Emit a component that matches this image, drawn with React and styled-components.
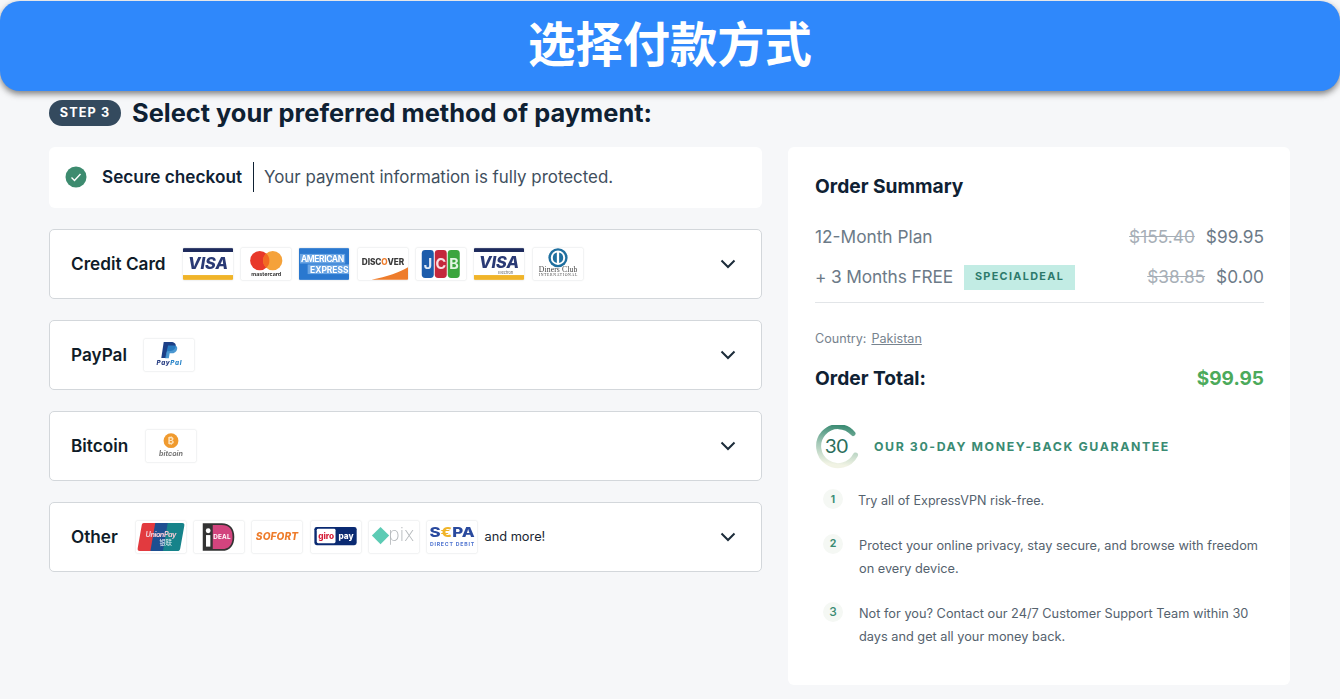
import React from "react";
import styled, { createGlobalStyle } from "styled-components";

const Global = createGlobalStyle`
  html, body { margin: 0; padding: 0; background: #f6f7f9; }
  body { font-family: Inter, "Noto Sans CJK SC", sans-serif; color: #0f2133; }
  * { box-sizing: border-box; }
`;

const Page = styled.div`
  width: 1340px; height: 699px; overflow: hidden; background: #f6f7f9; padding-top: 1px;
`;
const Banner = styled.header`
  height: 90px; background: #2f88fb; border-radius: 20px;
  box-shadow: 0 3px 6px rgba(30, 30, 30, .55);
  display: flex; align-items: center; justify-content: center;
  color: #fff; font: 700 47.300px/1 "Noto Sans CJK SC", sans-serif;
  padding-bottom: 8px;
`;
const Content = styled.main`
  padding: 9px 50px 0 49px;
`;
const StepLine = styled.div`
  display: flex; align-items: center; gap: 11px; height: 26px;
`;
const StepPill = styled.span`
  width: 72px; height: 26px; border-radius: 13px; background: #344a5e; color: #fff;
  display: flex; align-items: center; justify-content: center;
  font: 700 12.700px/1 Inter, sans-serif; letter-spacing: 1.100px;
`;
const Title = styled.h1`
  margin: 0; font: 700 25.400px/26px Inter, sans-serif; color: #0f2133;
`;
const Columns = styled.div`
  display: flex; gap: 26px; margin-top: 21px; align-items: flex-start;
`;
const Left = styled.section`
  width: 713px; display: flex; flex-direction: column; gap: 21px;
`;
const Secure = styled.div`
  height: 61px; background: #fff; border-radius: 6px; display: flex; align-items: center;
  padding: 0 0 1px 16px;
`;
const SecureBold = styled.strong`
  font: 600 17.200px/1 Inter, sans-serif; margin-left: 15px; color: #0f2133;
`;
const Divider = styled.span`
  width: 1px; height: 30px; background: #0f2133; margin: 0 10px 0 11px;
`;
const SecureText = styled.span`
  font: 400 16.900px/1 Inter, sans-serif; color: #3f4f5e; margin-top: 1px;
`;
const Row = styled.div`
  height: 70px; background: #fff; border: 1px solid #d3d7db; border-radius: 5px;
  display: flex; align-items: center; padding: 0 25px 0 21px;
`;
const RowLabel = styled.span`
  font: 600 17.200px/1 Inter, sans-serif; color: #0f1c28; margin-right: ${p => p.$gap}px;
`;
const Logos = styled.div`
  display: flex; gap: 8.330px; align-items: center; flex: 1;
`;
const LogoBox = styled.span`
  width: 50px; height: 32px; background: #fff; display: block; flex: none;
  box-shadow: 0 0 1.500px rgba(60, 70, 80, .32);
  border-radius: 1px; overflow: hidden;
  svg { display: block; width: 100%; height: 100%; filter: blur(.35px); }
`;
const More = styled.span`
  font: 400 12.800px/1 Inter, sans-serif; color: #1b2733; margin-left: -1.330px;
`;
const Summary = styled.aside`
  width: 502px; height: 538px; background: #fff; border-radius: 6px; padding: 27px 26px 0 27px;
`;
const SummaryTitle = styled.h2`
  margin: 0; font: 700 19.200px/24px Inter, sans-serif; color: #0f2133;
`;
const PriceRow = styled.div`
  display: flex; align-items: center; justify-content: space-between; height: 26px;
  margin-top: ${p => p.$top}px; color: #6c7a87; font: 400 17.300px/1 Inter, sans-serif;
`;
const PriceLabel = styled.div` display: flex; align-items: center; gap: 11px; `;
const FreeText = styled.span` letter-spacing: -.13px; `;
const Promo = styled.span`
  width: 111px; height: 25px; background: #c2ece4; color: #2d7a6b;
  display: flex; align-items: center; justify-content: center;
  font: 700 10.800px/1 Inter, sans-serif; letter-spacing: 1.350px;
`;
const Prices = styled.div` display: flex; gap: 11px; `;
const Old = styled.s` color: #a7afb7; `;
const Rule = styled.hr`
  border: 0; height: 1px; background: #e2e5e8; margin: 12px 0 0;
`;
const Country = styled.div`
  margin-top: 29px; font: 400 12.600px/14px Inter, sans-serif; color: #77838e; display: flex; gap: 5px;
`;
const CountryLink = styled.a` color: #77838e; text-decoration: underline; `;
const Total = styled.div`
  display: flex; justify-content: space-between; align-items: center; margin-top: 19px;
  font: 700 19.200px/24px Inter, sans-serif; color: #0f2133;
`;
const TotalValue = styled.span` color: #4caa5b; font-size: 19px; margin-top: 2px; `;
const GuaranteeHead = styled.div`
  display: flex; align-items: center; gap: 15px; margin-top: 34px; height: 44px;
`;
const GuaranteeTitle = styled.span`
  font: 700 12.300px/1 Inter, sans-serif; letter-spacing: 1.600px; color: #3a8b73; white-space: nowrap;
`;
const Steps = styled.ol`
  list-style: none; margin: 0; padding: 0 0 0 8px;
`;
const StepItem = styled.li`
  display: flex; margin-top: ${p => p.$top}px;
  font: 400 ${p => p.$font}px/23px Inter, sans-serif; color: #55626e;
`;
const Num = styled.span`
  width: 20px; height: 20px; flex: none; border-radius: 50%; background: #f5f8f4; color: #3a8b73;
  font: ${p => p.$weight} ${p => p.$size}px/20px Inter, sans-serif; text-align: center; margin-right: ${p => p.$gap}px;
`;

const Visa = ({ sub }) => (
  <svg viewBox="0 0 52 33">
    <rect width="52" height="33" fill="#fff" />
    <rect width="52" height="4" fill="#1d2a5c" />
    <rect y="28" width="52" height="5" fill="#f0b429" />
    <text x="26" y={sub ? 20.500 : 22} textAnchor="middle" fontFamily="Inter" fontStyle="italic" fontWeight="800" fontSize="17" fill="#2a3a75">VISA</text>
    {sub && <text x="33" y="26.500" textAnchor="middle" fontFamily="Inter" fontSize="4" fill="#555">Electron</text>}
  </svg>
);
const Master = () => (
  <svg viewBox="0 0 52 33">
    <circle cx="19.500" cy="13" r="10" fill="#e8392a" />
    <circle cx="33" cy="13" r="10" fill="#f5a23a" />
    <path d="M26.250 5.600a10 10 0 0 1 0 14.800a10 10 0 0 1 0-14.800z" fill="#f26a22" />
    <text x="26.250" y="28.500" textAnchor="middle" fontFamily="Inter" fontWeight="700" fontSize="5.600" fill="#333">mastercard</text>
  </svg>
);
const Amex = () => (
  <svg viewBox="0 0 52 33">
    <rect width="52" height="33" fill="#2a78cf" />
    <rect x="1" y="6" width="47" height="10" fill="#6aa5e4" />
    <rect x="9" y="17" width="43" height="10" fill="#6aa5e4" />
    <text x="24.500" y="14.500" textAnchor="middle" textLength="45" fontFamily="Inter" fontWeight="700" fontSize="8.800" fill="#fff">AMERICAN</text>
    <text x="31.500" y="25.500" textAnchor="middle" textLength="40" fontFamily="Inter" fontWeight="700" fontSize="8.800" fill="#fff">EXPRESS</text>
  </svg>
);
const Discover = () => (
  <svg viewBox="0 0 52 33">
    <path d="M14 33C30 30 44 25 52 20V33z" fill="#ee7c2b" />
    <text x="26" y="17.500" textAnchor="middle" textLength="44" fontFamily="Inter" fontWeight="800" fontSize="8.600" fill="#3a3a3a">DISC<tspan fill="#ee7c2b">O</tspan>VER</text>
  </svg>
);
const Jcb = () => (
  <svg viewBox="0 0 52 33">
    <rect x="6" y="2" width="12.500" height="29" rx="3.500" fill="#1c5cab" />
    <rect x="19.500" y="2" width="12.500" height="29" rx="3.500" fill="#c4283c" />
    <rect x="33" y="2" width="12.500" height="29" rx="3.500" fill="#3ba53e" />
    <text x="12.500" y="22" textAnchor="middle" fontFamily="Inter" fontWeight="700" fontSize="15" fill="#dfe9f5">J</text>
    <text x="25.750" y="22" textAnchor="middle" fontFamily="Inter" fontWeight="700" fontSize="15" fill="#f7dfe3">C</text>
    <text x="39.500" y="22" textAnchor="middle" fontFamily="Inter" fontWeight="700" fontSize="15" fill="#e3f5e3">B</text>
  </svg>
);
const Diners = () => (
  <svg viewBox="0 0 52 33">
    <circle cx="26" cy="10" r="10" fill="#1f6f9f" />
    <circle cx="26" cy="10" r="7.500" fill="#fff" />
    <path d="M24.800 4.500a5.700 5.700 0 0 0 0 11z" fill="#1f6f9f" />
    <path d="M27.200 4.500a5.700 5.700 0 0 1 0 11z" fill="#1f6f9f" />
    <text x="26" y="25" textAnchor="middle" textLength="40" fontFamily="Liberation Serif" fontSize="8" fill="#444">Diners Club</text>
    <text x="26" y="29.500" textAnchor="middle" textLength="40" fontFamily="Liberation Serif" fontSize="4" fill="#444">INTERNATIONAL</text>
  </svg>
);
const PayPal = () => (
  <svg viewBox="0 0 52 33">
    <path d="M20.500 3h7.500c3.500 0 5.500 1.800 5 4.500-.6 3.700-3.400 5-7 5h-2L22.700 19.500h-4.700z" fill="#1c3f87" />
    <path d="M25 6.500h6.500c2.300 0 3.400 1.500 3 3.700-.6 3.200-3 4.600-6 4.600h-1.800l-.9 5.200h-3.900z" fill="#2a85c9" opacity=".85" />
    <text x="26" y="26.800" textAnchor="middle" textLength="26" fontFamily="Inter" fontStyle="italic" fontWeight="800" fontSize="6.600" fill="#253b80">Pay<tspan fill="#2a85c9">Pal</tspan></text>
  </svg>
);
const Bitcoin = () => (
  <svg viewBox="0 0 52 33">
    <circle cx="26" cy="11" r="7.700" fill="#f09a2e" />
    <text x="26" y="14.800" textAnchor="middle" fontFamily="Inter" fontWeight="700" fontSize="10" fill="#fde3bd">₿</text>
    <text x="26" y="26.500" textAnchor="middle" textLength="25" fontFamily="Inter" fontStyle="italic" fontWeight="700" fontSize="7.400" fill="#777">bitcoin</text>
  </svg>
);
const Union = () => (
  <svg viewBox="0 0 52 33">
    <path d="M8 2h14l-5 29H4c-2 0-2.600-1-2.200-3L6 4c.3-1.300 1-2 2-2z" fill="#e23a3f" />
    <path d="M20 2h15l-5 29H15z" fill="#1d4f91" />
    <path d="M33 2h15c2 0 2.600 1 2.200 3l-4.200 23.500c-.3 1.500-1 2.500-2 2.500H28z" fill="#16838a" />
    <text x="26" y="16" textAnchor="middle" textLength="32" fontFamily="Inter" fontStyle="italic" fontWeight="700" fontSize="7.600" fill="#f0c9d3">UnionPay</text>
    <text x="31" y="25" textAnchor="middle" fontFamily="Noto Sans CJK SC" fontSize="6.500" fill="#e9f0f3">银联</text>
  </svg>
);
const Ideal = () => (
  <svg viewBox="0 0 52 33">
    <path d="M10 3h19c8 0 12 5.500 12 13.500S37 30 29 30H10z" fill="#d2447e" stroke="#333" strokeWidth="1.800" />
    <rect x="10" y="3" width="9.500" height="27" fill="#333" />
    <rect x="12.500" y="14.500" width="4.500" height="12" fill="#fff" />
    <circle cx="14.750" cy="10" r="2.500" fill="#fff" />
    <text x="29" y="18.500" textAnchor="middle" textLength="18" fontFamily="Inter" fontWeight="700" fontSize="6.600" fill="#fff">DEAL</text>
  </svg>
);
const Sofort = () => (
  <svg viewBox="0 0 52 33">
    <text x="26" y="19.800" textAnchor="middle" textLength="44" fontFamily="Inter" fontStyle="italic" fontWeight="800" fontSize="10.500" fill="#ee7c2b">SOFORT</text>
  </svg>
);
const Giro = () => (
  <svg viewBox="0 0 52 33">
    <rect x="3.500" y="6" width="44" height="19" rx="2.500" fill="#0a2a72" />
    <rect x="6" y="8" width="19.500" height="15" rx="1.500" fill="#fff" />
    <text x="15.750" y="18.800" textAnchor="middle" fontFamily="Inter" fontWeight="800" fontSize="8.600" fill="#d5203a">giro</text>
    <text x="36.500" y="18.800" textAnchor="middle" fontFamily="Inter" fontWeight="800" fontSize="8.600" fill="#fff">pay</text>
  </svg>
);
const Pix = () => (
  <svg viewBox="0 0 52 33">
    <path d="M12 6l9 9-9 9-9-9z" fill="#5ccbb4" />
    <text x="33.500" y="20.500" textAnchor="middle" textLength="27" fontFamily="Inter" fontWeight="200" fontSize="20" fill="#b5b9bc">pix</text>
  </svg>
);
const Sepa = () => (
  <svg viewBox="0 0 52 33">
    <text x="26" y="16.500" textAnchor="middle" textLength="47" lengthAdjust="spacingAndGlyphs" fontFamily="Inter" fontWeight="800" fontSize="14" fill="#2a4a9e">S<tspan fill="#f0b429">€</tspan>PA</text>
    <text x="26" y="25.500" textAnchor="middle" textLength="46" fontFamily="Inter" fontWeight="700" fontSize="5.400" fill="#4f74d0">DIRECT DEBIT</text>
  </svg>
);

const Check = () => (
  <svg width="22" height="22" viewBox="0 0 22 22" style={{ flex: "none" }}>
    <circle cx="11" cy="11" r="10.500" fill="#3d8b6f" />
    <path d="M6.500 11.500l3 3 6-6.500" fill="none" stroke="#fff" strokeWidth="1.400" />
  </svg>
);
const Chevron = () => (
  <svg width="16" height="10" viewBox="0 0 16 10" style={{ flex: "none" }}>
    <path d="M1.500 1.500L8 8l6.500-6.500" fill="none" stroke="#1c2c3a" strokeWidth="2" />
  </svg>
);
const Badge30 = () => (
  <svg width="44" height="44" viewBox="0 0 44 44" style={{ flex: "none" }}>
    <defs>
      <linearGradient id="ring" x1="0.800" y1="0" x2="0.700" y2="1">
        <stop offset="0" stopColor="#3c8c74" />
        <stop offset=".5" stopColor="#a5c9b8" />
        <stop offset="1" stopColor="#f1f3e4" />
      </linearGradient>
    </defs>
    <path d="M38 8.500A19.500 19.500 0 1 0 40.500 30" fill="none" stroke="url(#ring)" strokeWidth="5" strokeLinecap="round" />
    <text x="21.500" y="28" textAnchor="middle" fontFamily="Lato" fontSize="20" fill="#2b6e5c">30</text>
  </svg>
);

const Logo = ({ children }) => <LogoBox>{children}</LogoBox>;

export default function App() {
  return (
    <Page>
      <Global />
      <Banner>选择付款方式</Banner>
      <Content>
        <StepLine>
          <StepPill>STEP 3</StepPill>
          <Title>Select your preferred method of payment:</Title>
        </StepLine>
        <Columns>
          <Left>
            <Secure>
              <Check />
              <SecureBold>Secure checkout</SecureBold>
              <Divider />
              <SecureText>Your payment information is fully protected.</SecureText>
            </Secure>
            <Row>
              <RowLabel $gap={17}>Credit Card</RowLabel>
              <Logos>
                <Logo><Visa /></Logo><Logo><Master /></Logo><Logo><Amex /></Logo><Logo><Discover /></Logo>
                <Logo><Jcb /></Logo><Logo><Visa sub /></Logo><Logo><Diners /></Logo>
              </Logos>
              <Chevron />
            </Row>
            <Row>
              <RowLabel $gap={17}>PayPal</RowLabel>
              <Logos><Logo><PayPal /></Logo></Logos>
              <Chevron />
            </Row>
            <Row>
              <RowLabel $gap={18}>Bitcoin</RowLabel>
              <Logos><Logo><Bitcoin /></Logo></Logos>
              <Chevron />
            </Row>
            <Row>
              <RowLabel $gap={18}>Other</RowLabel>
              <Logos>
                <Logo><Union /></Logo><Logo><Ideal /></Logo><Logo><Sofort /></Logo>
                <Logo><Giro /></Logo><Logo><Pix /></Logo><Logo><Sepa /></Logo>
                <More>and more!</More>
              </Logos>
              <Chevron />
            </Row>
          </Left>
          <Summary>
            <SummaryTitle>Order Summary</SummaryTitle>
            <PriceRow $top={26}>
              <span>12-Month Plan</span>
              <Prices><Old>$155.40</Old><span>$99.95</span></Prices>
            </PriceRow>
            <PriceRow $top={14}>
              <PriceLabel><FreeText>+ 3 Months FREE</FreeText><Promo>SPECIALDEAL</Promo></PriceLabel>
              <Prices><Old>$38.85</Old><span>$0.00</span></Prices>
            </PriceRow>
            <Rule />
            <Country>Country: <CountryLink>Pakistan</CountryLink></Country>
            <Total>Order Total: <TotalValue>$99.95</TotalValue></Total>
            <GuaranteeHead>
              <Badge30 />
              <GuaranteeTitle>OUR 30-DAY MONEY-BACK GUARANTEE</GuaranteeTitle>
            </GuaranteeHead>
            <Steps>
              <StepItem $top={20} $font={12.600}><Num $size={10} $weight={700} $gap={15}>1</Num><span>Try all of ExpressVPN risk-free.</span></StepItem>
              <StepItem $top={22} $font={12.750}><Num $size={10.500} $weight={700} $gap={16}>2</Num><span>Protect your online privacy, stay secure, and browse with freedom on every device.</span></StepItem>
              <StepItem $top={22} $font={12.750}><Num $size={12} $weight={500} $gap={16}>3</Num><span>Not for you? Contact our 24/7 Customer Support Team within 30 days and get all your money back.</span></StepItem>
            </Steps>
          </Summary>
        </Columns>
      </Content>
    </Page>
  );
}
